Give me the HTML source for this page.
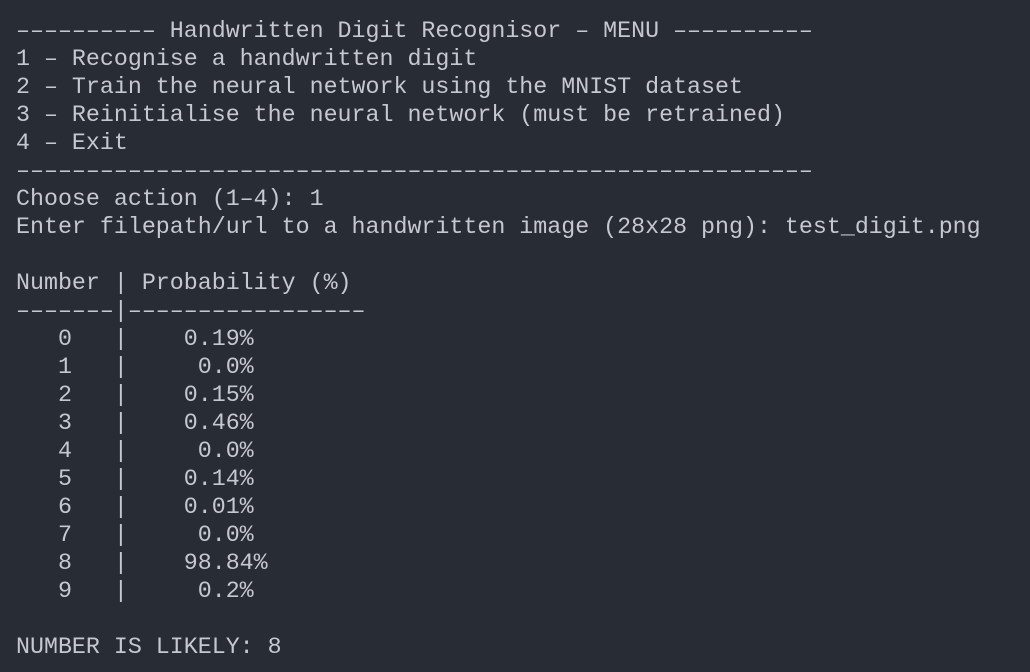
<!DOCTYPE html>
<html><head><meta charset="utf-8"><style>
html,body{margin:0;padding:0;}
body{width:1030px;height:672px;background:#282c34;overflow:hidden;}
pre{margin:0;position:absolute;left:16px;top:17px;font-family:"Liberation Mono","DejaVu Sans Mono",monospace;font-size:23.3px;line-height:28px;color:#c5c8d0;white-space:pre;}
</style></head><body><pre>–––––––––– Handwritten Digit Recognisor – MENU ––––––––––
1 – Recognise a handwritten digit
2 – Train the neural network using the MNIST dataset
3 – Reinitialise the neural network (must be retrained)
4 – Exit
–––––––––––––––––––––––––––––––––––––––––––––––––––––––––
Choose action (1–4): 1
Enter filepath/url to a handwritten image (28x28 png): test_digit.png

Number | Probability (%)
–––––––|–––––––––––––––––
   0   |    0.19%
   1   |     0.0%
   2   |    0.15%
   3   |    0.46%
   4   |     0.0%
   5   |    0.14%
   6   |    0.01%
   7   |     0.0%
   8   |    98.84%
   9   |     0.2%

NUMBER IS LIKELY: 8</pre></body></html>
